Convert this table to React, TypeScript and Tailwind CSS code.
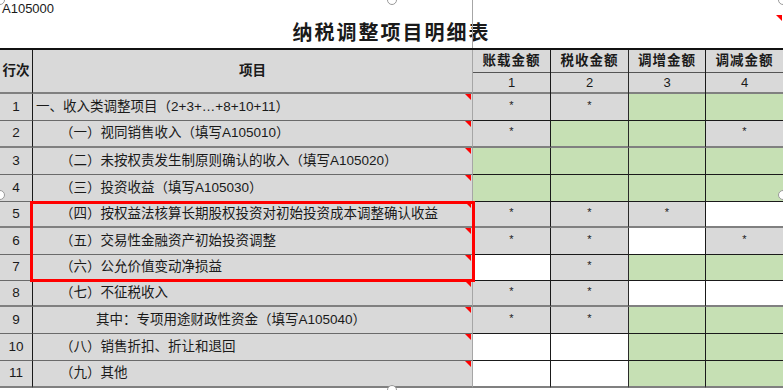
import React from 'react';

type Fill = 'g' | 'G' | 'w';

interface RowData {
  n: number;
  text: string;
  indent: string;
  height: string;
  bottom: 'thin' | 'thick';
  cells: [Fill, boolean][];
}

const rows: RowData[] = [
  { n: 1, text: '一、收入类调整项目（2+3+…+8+10+11）', indent: 'pl-[3px]', height: 'h-[27px]', bottom: 'thin', cells: [['g', true], ['g', true], ['G', false], ['G', false]] },
  { n: 2, text: '（一）视同销售收入（填写A105010）', indent: 'pl-[27px]', height: 'h-[27px]', bottom: 'thick', cells: [['g', true], ['G', false], ['G', false], ['g', true]] },
  { n: 3, text: '（二）未按权责发生制原则确认的收入（填写A105020）', indent: 'pl-[27px]', height: 'h-[27px]', bottom: 'thin', cells: [['G', false], ['G', false], ['G', false], ['G', false]] },
  { n: 4, text: '（三）投资收益（填写A105030）', indent: 'pl-[27px]', height: 'h-[27px]', bottom: 'thin', cells: [['G', false], ['G', false], ['G', false], ['G', false]] },
  { n: 5, text: '（四）按权益法核算长期股权投资对初始投资成本调整确认收益', indent: 'pl-[27px]', height: 'h-[26px]', bottom: 'thick', cells: [['g', true], ['g', true], ['g', true], ['w', false]] },
  { n: 6, text: '（五）交易性金融资产初始投资调整', indent: 'pl-[27px]', height: 'h-[27px]', bottom: 'thin', cells: [['g', true], ['g', true], ['w', false], ['g', true]] },
  { n: 7, text: '（六）公允价值变动净损益', indent: 'pl-[27px]', height: 'h-[26px]', bottom: 'thin', cells: [['w', false], ['g', true], ['G', false], ['G', false]] },
  { n: 8, text: '（七）不征税收入', indent: 'pl-[27px]', height: 'h-[26px]', bottom: 'thick', cells: [['g', true], ['g', true], ['w', false], ['w', false]] },
  { n: 9, text: '其中：专项用途财政性资金（填写A105040）', indent: 'pl-[63px]', height: 'h-[27px]', bottom: 'thin', cells: [['g', true], ['g', true], ['G', false], ['G', false]] },
  { n: 10, text: '（八）销售折扣、折让和退回', indent: 'pl-[27px]', height: 'h-[27px]', bottom: 'thin', cells: [['w', false], ['w', false], ['G', false], ['G', false]] },
  { n: 11, text: '（九）其他', indent: 'pl-[27px]', height: 'h-[27px]', bottom: 'thick', cells: [['w', false], ['w', false], ['G', false], ['G', false]] },
];

const fillClass: Record<Fill, string> = {
  g: 'bg-[#d9d9d9]',
  G: 'bg-[#c6e0b4]',
  w: 'bg-white',
};

const valueWidths = ['w-[78px]', 'w-[78px]', 'w-[77px]', 'w-[77px]'];
const valueRight = ['border-r border-r-[#1a1a1a]', 'border-r border-r-[#2a2a2a]', 'border-r border-r-[#1a1a1a]', ''];

const Corner = () => (
  <div className="absolute right-[1px] top-0 h-0 w-0 border-l-[6px] border-t-[6px] border-l-transparent border-t-[#ff0000]" />
);

const Handle = ({ pos }: { pos: string }) => (
  <div className={`absolute h-[10px] w-[10px] rounded-full border border-[#9a9a9a] bg-white ${pos}`} />
);

export default function App() {
  return (
    <div
      className="relative h-[390px] w-[783px] overflow-hidden bg-white text-[#1a1a1a]"
      style={{ fontFamily: '"Liberation Sans", "Noto Sans CJK SC", sans-serif' }}
    >
      {/* 顶部标题区 */}
      <div className="relative flex h-[48px]">
        <div className="absolute left-[2px] top-[1px] text-[13px] leading-[16px]">A105000</div>
        <div className="flex flex-1 items-end justify-center pb-[2px]">
          <span className="text-[20px] font-bold leading-[26px] tracking-[2px]">纳税调整项目明细表</span>
        </div>
        <div className="absolute left-[472px] top-0 h-[48px] w-px bg-[#a6a6a6]" />
        <div className="absolute right-[1px] top-[15px] h-0 w-0 border-l-[6px] border-t-[6px] border-l-transparent border-t-[#ff0000]" />
      </div>

      {/* 表格 */}
      <div className="relative border-t-2 border-t-[#111]">
        {/* 表头 */}
        <div className="flex h-[44px] bg-[#d9d9d9] text-[13.5px] font-bold">
          <div className="flex w-[33px] items-center justify-center border-r border-b-2 border-r-[#1a1a1a] border-b-[#808080]">
            行次
          </div>
          <div className="flex w-[440px] items-center justify-center border-r border-b-2 border-r-[#a6a6a6] border-b-[#808080]">
            项目
          </div>
          {['账载金额', '税收金额', '调增金额', '调减金额'].map((label, i) => (
            <div key={label} className={`flex flex-col ${valueWidths[i]} ${valueRight[i]}`}>
              <div className="flex h-[26px] items-center justify-center border-b border-b-[#555] tracking-[1px]">
                {label}
              </div>
              <div className="flex flex-1 items-center justify-center border-b-2 border-b-[#808080] text-[13px] font-normal">
                {i + 1}
              </div>
            </div>
          ))}
        </div>

        {/* 数据行 */}
        {rows.map(row => {
          const lineLeft = row.bottom === 'thick' ? 'border-b-2 border-b-[#808080]' : 'border-b border-b-[#6a6a6a]';
          const lineRight = row.bottom === 'thick' ? 'border-b-2 border-b-[#808080]' : 'border-b border-b-[#1a1a1a]';
          return (
            <div key={row.n} className={`flex ${row.height} text-[13.5px]`}>
              <div className={`flex w-[33px] items-center justify-center bg-[#d9d9d9] border-r border-r-[#1a1a1a] ${lineLeft}`}>
                {row.n}
              </div>
              <div className={`relative flex w-[440px] items-center whitespace-nowrap bg-[#d9d9d9] border-r border-r-[#a6a6a6] ${row.indent} ${lineLeft}`}>
                {row.text}
                <Corner />
              </div>
              {row.cells.map(([fill, star], i) => (
                <div
                  key={i}
                  className={`flex items-center justify-center ${valueWidths[i]} ${fillClass[fill]} ${valueRight[i]} ${lineRight}`}
                >
                  {star && <span className="-mt-[4px] text-[11px] leading-none">*</span>}
                </div>
              ))}
            </div>
          );
        })}

        {/* 红色标注框 */}
        <div className="absolute left-[30px] top-[151px] h-[81px] w-[445px] border-[3px] border-[#ff0000]" />
      </div>

      {/* 图片选中手柄 */}
      <Handle pos="left-[387px] -top-[5px]" />
      <Handle pos="-left-[5px] top-[190px]" />
      <Handle pos="-right-[5px] top-[190px]" />
      <Handle pos="left-[387px] -bottom-[5px]" />
      <Handle pos="-left-[5px] -top-[5px]" />
      <Handle pos="-right-[5px] -top-[5px]" />
    </div>
  );
}
